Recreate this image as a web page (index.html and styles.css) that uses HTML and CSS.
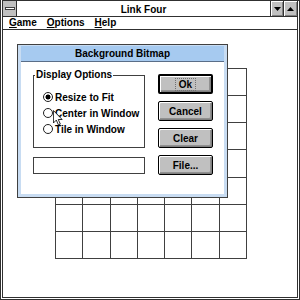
FILE: index.html
```html
<!DOCTYPE html>
<html>
<head>
<meta charset="utf-8">
<title>Link Four</title>
<link rel="stylesheet" href="styles.css">
</head>
<body>
<div class="window">
  <div class="titlebar">
    <div class="sysmenu"><span class="sysbar"></span></div>
    <div class="title">Link Four</div>
    <div class="tbtn tbtn-min"><svg width="7" height="4" viewBox="0 0 7 4"><path d="M0 0H7L3.5 4Z" fill="#000"/></svg></div>
    <div class="tbtn tbtn-max"><svg width="7" height="4" viewBox="0 0 7 4"><path d="M0 4H7L3.5 0Z" fill="#000"/></svg></div>
  </div>
  <div class="menubar">
    <span class="menu"><u>G</u>ame</span>
    <span class="menu"><u>O</u>ptions</span>
    <span class="menu"><u>H</u>elp</span>
  </div>
  <div class="client">
    <div class="board">
      <span></span><span></span><span></span><span></span><span></span><span></span><span></span>
      <span></span><span></span><span></span><span></span><span></span><span></span><span></span>
      <span></span><span></span><span></span><span></span><span></span><span></span><span></span>
      <span></span><span></span><span></span><span></span><span></span><span></span><span></span>
      <span></span><span></span><span></span><span></span><span></span><span></span><span></span>
      <span></span><span></span><span></span><span></span><span></span><span></span><span></span>
      <span></span><span></span><span></span><span></span><span></span><span></span><span></span>
    </div>
  </div>

  <div class="dialog">
    <div class="dlg-title">Background Bitmap</div>
    <div class="dlg-body">
      <div class="dlg-left">
        <fieldset class="group">
          <legend>Display Options</legend>
          <div class="opt"><span class="radio checked"></span><span>Resize to Fit</span></div>
          <div class="opt"><span class="radio"></span><span>Center in Window</span></div>
          <div class="opt"><span class="radio"></span><span>Tile in Window</span></div>
        </fieldset>
        <div class="textbox"></div>
      </div>
      <div class="dlg-right">
        <div class="btn btn-default"><span class="focus">Ok</span></div>
        <div class="btn">Cancel</div>
        <div class="btn">Clear</div>
        <div class="btn">File...</div>
      </div>
    </div>
  </div>

  <svg class="cursor" width="10" height="16" viewBox="0 0 12 19">
    <path d="M0.5 0.5V15.5L4 12L6.5 17.8L8.8 16.8L6.3 11.3H11Z" fill="#fff" stroke="#000" stroke-width="1" stroke-linejoin="miter"/>
  </svg>
</div>
</body>
</html>
```

FILE: styles.css
```css
* {
  box-sizing: border-box;
}

html,
body {
  margin: 0;
  padding: 0;
  background: #fff;
}

body {
  font-family: "Liberation Sans", Arial, sans-serif;
  font-size: 10px;
  font-weight: bold;
  color: #000;
}

.window {
  position: relative;
  width: 300px;
  height: 300px;
  border: 3px double #303030;
  border-top: 1px solid #303030;
  display: flex;
  flex-direction: column;
  background: #fff;
  overflow: hidden;
}

/* Title bar */
.titlebar {
  display: flex;
  height: 16px;
  border-bottom: 1px solid #303030;
}

.sysmenu {
  width: 14px;
  background: #c0c0c0;
  border-right: 1px solid #303030;
  display: flex;
  align-items: center;
  justify-content: center;
}

.sysbar {
  width: 10px;
  height: 3px;
  background: #fff;
  border: 1px solid #404040;
}

.title {
  flex: 1;
  text-align: center;
  line-height: 15px;
  padding-top: 1px;
}

.tbtn {
  background: #c0c0c0;
  border-left: 1px solid #303030;
  box-shadow: inset 1px 1px #fff, inset -1px -1px #808080;
  display: flex;
  align-items: center;
  justify-content: center;
}

.tbtn-min {
  width: 13px;
}

.tbtn-max {
  width: 14px;
}

/* Menu bar */
.menubar {
  display: flex;
  gap: 10px;
  height: 13px;
  padding-left: 6px;
  border-bottom: 1px solid #303030;
  line-height: 12px;
}

.menu u {
  text-decoration-thickness: 1px;
}

/* Client area with the board */
.client {
  flex: 1;
  padding: 38px 0 0 52px;
}

.board {
  display: grid;
  grid-template-columns: repeat(7, 1fr);
  grid-template-rows: repeat(7, 1fr);
  width: 192px;
  height: 191px;
  border-left: 1px solid #404040;
  border-top: 1px solid #404040;
}

.board span {
  border-right: 1px solid #404040;
  border-bottom: 1px solid #404040;
}

/* Dialog */
.dialog {
  position: absolute;
  left: 14px;
  top: 43px;
  width: 211px;
  height: 154px;
  border: 1px solid #404040;
  background: #c8dcf2;
  padding: 1px 3px 3px;
  display: flex;
  flex-direction: column;
}

.dlg-title {
  height: 16px;
  background: #a6caf0;
  border-bottom: 1px solid #5a6e88;
  text-align: center;
  line-height: 15px;
}

.dlg-body {
  flex: 1;
  background: #fff;
  display: flex;
  align-items: flex-start;
  gap: 13px;
  padding: 0 11px 0 12px;
}

.dlg-left {
  width: 112px;
  padding-top: 7px;
  display: flex;
  flex-direction: column;
}

.group {
  margin: 0;
  height: 79px;
  padding: 8px 0 0 1px;
  border: 1px solid #404040;
}

.group legend {
  padding: 0 1px;
  line-height: 12px;
}

.opt {
  display: flex;
  align-items: center;
  gap: 2px;
  height: 16px;
  margin-left: 8px;
  white-space: nowrap;
}

.radio {
  width: 10px;
  height: 10px;
  border: 1px solid #202020;
  border-radius: 50%;
  background: #fff;
  flex: none;
}

.radio.checked {
  background: radial-gradient(circle, #000 0, #000 2.2px, #fff 2.8px);
}

.textbox {
  margin-top: 9px;
  height: 17px;
  border: 1px solid #404040;
  background: #fff;
}

.dlg-right {
  width: 55px;
  padding-top: 12px;
  display: flex;
  flex-direction: column;
  gap: 7px;
}

.btn {
  height: 20px;
  border: 1px solid #000;
  border-radius: 2px;
  background: #c0c0c0;
  box-shadow: inset 1px 1px #fff, inset -1px -1px #808080, inset -2px -2px #909090;
  display: flex;
  align-items: center;
  justify-content: center;
}

.btn-default {
  border-width: 2px;
}

.focus {
  outline: 1px dotted #707070;
  padding: 0 3px;
  line-height: 11px;
}

/* Mouse pointer */
.cursor {
  position: absolute;
  left: 50px;
  top: 109px;
}
```
